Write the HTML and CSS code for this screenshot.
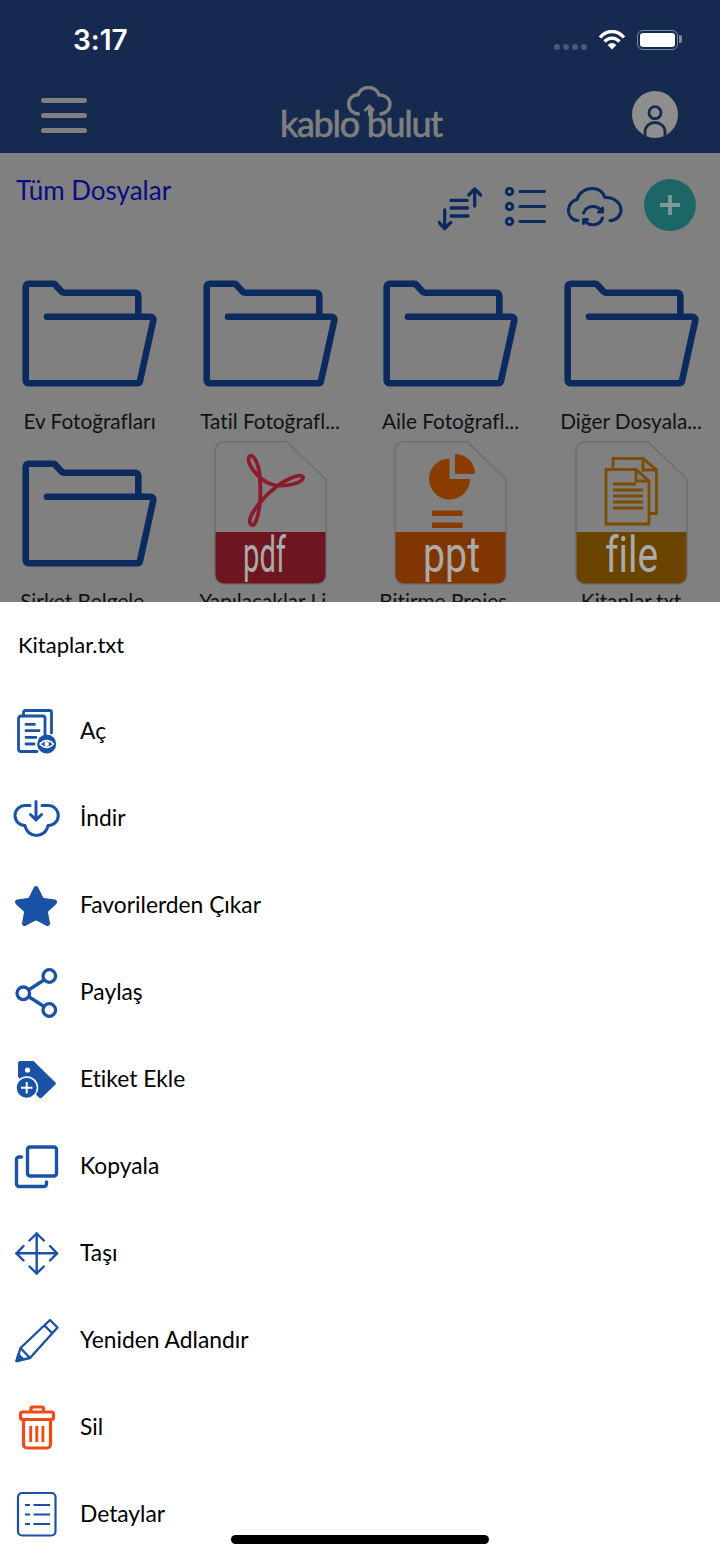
FILE: index.html
```html
<!DOCTYPE html>
<html lang="tr">
<head>
    <meta charset="UTF-8">
    <meta name="viewport" content="width=device-width, initial-scale=1.0">
    <title>Kablo Bulut</title>
    <link rel="stylesheet" href="styles.css">
</head>
<body>
    <svg class="defs" width="0" height="0">
        <symbol id="folder" viewBox="0 0 135 107">
            <path d="M25 36.700H128.400A3 3 0 0 1 131.300 40.300L118 100.900A3 3 0 0 1 115.100 103.300H6.700A3 3 0 0 1 3.700 100.300V6.700A3 3 0 0 1 6.700 3.700H31A3 3 0 0 1 33 4.400L40 12A3 3 0 0 0 42 12.700H113.300A3 3 0 0 1 116.300 15.700V36" fill="none" stroke="currentColor" stroke-width="6.600" stroke-linecap="round" stroke-linejoin="round"/>
        </symbol>
        <symbol id="sheet" viewBox="0 0 113 144">
            <path d="M9 .7H73L112 38.500V134a9 9 0 0 1-9 9H10a9 9 0 0 1-9-9V9a9 9 0 0 1 8-8.300Z" fill="#808080" stroke="#6e6e6e" stroke-width="1.500"/>
        </symbol>
    </svg>

    <header class="topbar">
        <div class="status">
            <span class="clock">3:17</span>
            <div class="status-icons">
                <span class="signal"><i></i><i></i><i></i><i></i></span>
                <svg class="wifi" width="28" height="20" viewBox="0 0 28 20">
                    <path d="M2 7.500C9-.5 19-.5 26 7.500M6.500 11.500C11 7 17 7 21.500 11.500" fill="none" stroke="#fff" stroke-width="3.400"/>
                    <path d="M9.700 15C12.500 12.300 15.500 12.300 18.300 15L14 19.500Z" fill="#fff"/>
                </svg>
                <span class="battery"><b></b></span>
            </div>
        </div>
        <div class="navbar">
            <div class="burger"><i></i><i></i><i></i></div>
            <svg class="logo" width="170" height="62" viewBox="-5 0 170 62">
                <path d="M79.700 28C72 28 68.700 23 68.700 18C68.700 12.500 73 8.500 78 8.800C80 3.500 84.500 1.500 88.500 1.500C93.500 1.500 98 4.500 99 9C104.500 8.500 110 12.500 110 18C110 23.500 106 28 99.500 28" fill="none" stroke="#7f7f7f" stroke-width="3.400"/>
                <path d="M84.500 25L89.300 20L94 25" fill="none" stroke="#7f7f7f" stroke-width="2.600"/>
                <path d="M89.300 22V30" stroke="#7f7f7f" stroke-width="2.800"/>
                <text class="logo-text" x="0" y="51">kablo bulut</text>
            </svg>
            <div class="avatar">
                <svg width="46" height="47" viewBox="0 0 46 47">
                    <circle cx="23" cy="21.700" r="6" fill="none" stroke="#152a4e" stroke-width="2.800"/>
                    <path d="M13 47V41C13 35 18 31.500 23 31.500C28 31.500 33 35 33 41V47" fill="none" stroke="#152a4e" stroke-width="2.800"/>
                </svg>
            </div>
        </div>
    </header>

    <main class="files">
        <div class="toolbar">
            <h1 class="crumb">Tüm Dosyalar</h1>
            <div class="tools">
                <svg class="tool-sort" width="44" height="44" viewBox="0 0 44 44" fill="none" stroke="#0b2a5e" stroke-width="3.300" stroke-linecap="round" stroke-linejoin="round">
                    <path d="M36.700 2V19M30.700 8L36.700 2L42.700 8M6.700 23V41.500M.9 35.500L6.700 41.500L12.700 35.500M13 13.400H29M13 21H29.500M13 29H30"/>
                </svg>
                <svg class="tool-list" width="41" height="40" viewBox="0 0 41 40" fill="none" stroke="#0b2a5e" stroke-width="3.100" stroke-linecap="round">
                    <circle cx="4.500" cy="4.500" r="3.200"/>
                    <circle cx="4.500" cy="19.500" r="3.200"/>
                    <circle cx="4.500" cy="34.500" r="3.200"/>
                    <path d="M15 4.500H39.500M15 19.500H39.500M15 34.500H39.500"/>
                </svg>
                <svg class="tool-cloud" width="56" height="41" viewBox="0 0 56 41" fill="none" stroke="#0b2a5e" stroke-width="3.100" stroke-linecap="round" stroke-linejoin="round">
                    <path d="M11 33.500C5 33.500 1.500 28.500 1.500 23.500C1.500 18 5 13.500 10 12.500C12 6 18 1.500 25 1.500C31 1.500 36 5 38 10.500C47 10 54 16 54 23C54 29 49 33.500 43 33.500"/>
                    <path d="M16.500 26A10 10 0 0 1 34.500 24.500M35.500 21V25H31.500M35.500 31A10 10 0 0 1 17.500 33M16.500 36.500V32.500H20.500"/>
                </svg>
                <div class="add">
                    <svg width="22" height="22" viewBox="0 0 22 22"><path d="M11 1V21M1 11H21" stroke="#809a98" stroke-width="3.800"/></svg>
                </div>
            </div>
        </div>

        <div class="grid">
            <div class="cell">
                <div class="thumb"><svg class="folder"><use href="#folder"/></svg></div>
                <p class="name">Ev Fotoğrafları</p>
            </div>
            <div class="cell">
                <div class="thumb"><svg class="folder"><use href="#folder"/></svg></div>
                <p class="name">Tatil Fotoğrafl...</p>
            </div>
            <div class="cell">
                <div class="thumb"><svg class="folder"><use href="#folder"/></svg></div>
                <p class="name">Aile Fotoğrafl...</p>
            </div>
            <div class="cell">
                <div class="thumb"><svg class="folder"><use href="#folder"/></svg></div>
                <p class="name">Diğer Dosyala...</p>
            </div>
            <div class="cell">
                <div class="thumb"><svg class="folder"><use href="#folder"/></svg></div>
                <p class="name">Şirket Belgele...</p>
            </div>
            <div class="cell">
                <div class="thumb">
                    <svg class="doc" viewBox="0 0 113 144">
                        <use href="#sheet"/>
                        <path d="M1.500 91H111.500V134a8.500 8.500 0 0 1-8.500 8.500H10a8.500 8.500 0 0 1-8.500-8.500Z" fill="#6e1620"/>
                        <path d="M36 15C40 13 46 25 46 40C47 55 46 70 42 80C40 86 35 85 36 78C38 70 50 55 62 46C72 38 86 32 89 36C90 42 72 46 60 44C50 42 40 32 36 24C34 19 34 16 36 15Z" fill="none" stroke="#8a1c2c" stroke-width="3.800"/>
                        <text class="doc-label" x="29" y="131" textLength="43" lengthAdjust="spacingAndGlyphs">pdf</text>
                    </svg>
                </div>
                <p class="name">Yapılacaklar Li...</p>
            </div>
            <div class="cell">
                <div class="thumb">
                    <svg class="doc" viewBox="0 0 113 144">
                        <use href="#sheet"/>
                        <path d="M1.500 91H111.500V134a8.500 8.500 0 0 1-8.500 8.500H10a8.500 8.500 0 0 1-8.500-8.500Z" fill="#803600"/>
                        <path d="M55.500 38V17.500A20.500 20.500 0 1 0 76 38Z" fill="#8a3c00"/>
                        <path d="M61 33V13A20 20 0 0 1 81 33Z" fill="#8a3c00"/>
                        <path d="M38 69.500H68.500V75H38ZM38 81.500H68.500V87H38Z" fill="#8a3c00"/>
                        <text class="doc-label" x="29" y="131" textLength="57" lengthAdjust="spacingAndGlyphs">ppt</text>
                    </svg>
                </div>
                <p class="name">Bitirme Projes...</p>
            </div>
            <div class="cell">
                <div class="thumb">
                    <svg class="doc" viewBox="0 0 113 144">
                        <use href="#sheet"/>
                        <path d="M1.500 91H111.500V134a8.500 8.500 0 0 1-8.500 8.500H10a8.500 8.500 0 0 1-8.500-8.500Z" fill="#6a4400"/>
                        <g fill="none" stroke="#7a4e00" stroke-width="2.800">
                            <path d="M38 27V17.500H68L81.500 29V72.500H75"/>
                            <path d="M68 17.500V29H81.500"/>
                            <path d="M31 28.500H61L74 40V83H31Z"/>
                            <path d="M61 28.500V40H74"/>
                            <path d="M38 43H61M38 49H68M38 55H68M38 61H68M38 67H68"/>
                        </g>
                        <text class="doc-label" x="30" y="131" textLength="53" lengthAdjust="spacingAndGlyphs">file</text>
                    </svg>
                </div>
                <p class="name">Kitaplar.txt</p>
            </div>
        </div>
    </main>

    <section class="sheet">
        <p class="sheet-title">Kitaplar.txt</p>
        <ul class="actions">
            <li class="action">
                <svg class="action-icon" viewBox="0 0 46 46" fill="none" stroke="#1a52a6" stroke-width="2.800" stroke-linecap="round" stroke-linejoin="round">
                    <path d="M9.500 7V3.500A2 2 0 0 1 11.500 1.500H35.500A2 2 0 0 1 37.500 3.500V24"/>
                    <path d="M31 25V9A2 2 0 0 0 29 7H7A2.500 2.500 0 0 0 4.500 9.500V40A2.500 2.500 0 0 0 7 42.500H23"/>
                    <path d="M12 15.300H20.500M12 21.700H25M12 28.300H22M12 35H20"/>
                    <circle cx="32.700" cy="35" r="9.500" fill="#1a52a6" stroke="none"/>
                    <path d="M26 35C30 30.500 35.500 30.500 39.500 35C35.500 39.500 30 39.500 26 35Z" fill="none" stroke="#fff" stroke-width="1.600"/>
                    <circle cx="32.700" cy="35" r="2.300" fill="#fff" stroke="none"/>
                </svg>
                <span class="action-label">Aç</span>
            </li>
            <li class="action">
                <svg class="action-icon" viewBox="0 0 46 46" fill="none" stroke="#1a52a6" stroke-width="3" stroke-linecap="round" stroke-linejoin="round">
                    <path d="M16 9.500H11.500A10 10 0 0 0 10.500 29.500H11C12 35.500 17 39.500 22.500 39.500S33 35.500 34 29.500H34.500A10 10 0 0 0 34 9.500H28"/>
                    <path d="M22 5.500V24M16.500 18.500L22 24L27.500 18.500"/>
                </svg>
                <span class="action-label">İndir</span>
            </li>
            <li class="action">
                <svg class="action-icon" viewBox="0 0 46 46">
                    <path d="M22 5.500L27.800 17.300L40.500 19.100L31.200 28L33.500 40.500L22 34.500L10.500 40.500L12.800 28L3.500 19.100L16.200 17.300Z" fill="#1a52a6" stroke="#1a52a6" stroke-width="5" stroke-linejoin="round"/>
                </svg>
                <span class="action-label">Favorilerden Çıkar</span>
            </li>
            <li class="action">
                <svg class="action-icon" viewBox="0 0 46 46" fill="none" stroke="#1a52a6" stroke-width="3.300">
                    <circle cx="35.300" cy="6" r="6.300"/>
                    <circle cx="9.300" cy="23.300" r="6.300"/>
                    <circle cx="35.300" cy="40" r="6.300"/>
                    <path d="M14.500 20L30 10M14.500 26.500L30 36.500"/>
                </svg>
                <span class="action-label">Paylaş</span>
            </li>
            <li class="action">
                <svg class="action-icon" viewBox="0 0 46 46">
                    <path d="M6 4.500H19.500L41 25.500A1.500 1.500 0 0 1 41 27.500L27.500 40.500A1.500 1.500 0 0 1 25.500 40.500L4.500 20V6A1.500 1.500 0 0 1 6 4.500Z" fill="#1a52a6" stroke="#1a52a6" stroke-width="1" stroke-linejoin="round"/>
                    <circle cx="13.500" cy="13" r="2.600" fill="#fff"/>
                    <circle cx="12.700" cy="30.700" r="11.500" fill="#fff"/>
                    <circle cx="12.700" cy="30.700" r="10" fill="#1a52a6"/>
                    <path d="M12.700 25V36.400M7 30.700H18.400" stroke="#fff" stroke-width="2"/>
                </svg>
                <span class="action-label">Etiket Ekle</span>
            </li>
            <li class="action">
                <svg class="action-icon" viewBox="0 0 46 46" fill="none" stroke="#1a52a6" stroke-width="3.400" stroke-linecap="round" stroke-linejoin="round">
                    <rect x="13.500" y="3" width="29" height="29" rx="2.500"/>
                    <path d="M7.500 13H5A2.500 2.500 0 0 0 2.500 15.500V40A2.500 2.500 0 0 0 5 42.500H30A2.500 2.500 0 0 0 32.500 40V38"/>
                </svg>
                <span class="action-label">Kopyala</span>
            </li>
            <li class="action">
                <svg class="action-icon" viewBox="0 0 46 46" fill="none" stroke="#1a52a6" stroke-width="2.400" stroke-linecap="round" stroke-linejoin="round">
                    <path d="M22.700 2.500V42.500M2.500 22.300H43"/>
                    <path d="M15.500 9.500L22.700 2.500L29.800 9.500M15.500 35.500L22.700 42.500L29.800 35.500M9.500 15L2.500 22.300L9.500 29.500M36 15L43 22.300L36 29.500"/>
                </svg>
                <span class="action-label">Taşı</span>
            </li>
            <li class="action">
                <svg class="action-icon" viewBox="0 0 46 46" fill="none" stroke="#1a52a6" stroke-width="2.400" stroke-linejoin="round">
                    <path d="M2.500 43L6.500 30L36 2L43.500 9.500L16 40Z"/>
                    <path d="M30.500 7.500L38.500 15.500M6.500 30L16 40"/>
                    <path d="M2.500 43L4.500 36.500L9 41Z" fill="#1a52a6"/>
                </svg>
                <span class="action-label">Yeniden Adlandır</span>
            </li>
            <li class="action">
                <svg class="action-icon" viewBox="0 0 46 46" fill="none" stroke="#ef4a14" stroke-width="3.200" stroke-linejoin="round">
                    <rect x="6.500" y="7" width="33" height="7.500" rx="2"/>
                    <path d="M17 7V3.500A1.500 1.500 0 0 1 18.500 2H28A1.500 1.500 0 0 1 29.500 3.500V7"/>
                    <path d="M9.500 14.500V39.500A3.500 3.500 0 0 0 13 43H33A3.500 3.500 0 0 0 36.500 39.500V14.500"/>
                    <path d="M16.700 21V37M22.800 21V37M28.900 21V37" stroke-width="2.900"/>
                </svg>
                <span class="action-label">Sil</span>
            </li>
            <li class="action">
                <svg class="action-icon" viewBox="0 0 46 46" fill="none" stroke="#1a52a6" stroke-width="2.200">
                    <rect x="4" y="1" width="37.500" height="42.500" rx="4"/>
                    <path d="M19.500 13H36M19.500 22.500H36M19.500 32H36"/>
                    <path d="M11 13H16M11 22.500H16M11 32H16"/>
                </svg>
                <span class="action-label">Detaylar</span>
            </li>
        </ul>
    </section>
    <div class="home-bar"></div>
</body>
</html>
```

FILE: styles.css
```css
* {
    box-sizing: border-box;
}

body {
    position: relative;
    width: 720px;
    height: 1558px;
    margin: 0;
    overflow: hidden;
    background-color: #808080;
    font-family: "Lato", "Noto Sans", sans-serif;
    font-variant-ligatures: none;
    color: #000;
}

.defs {
    position: absolute;
}

/* header */
.topbar {
    height: 153px;
    background-color: #152a4e;
}

.status {
    display: flex;
    justify-content: space-between;
    align-items: center;
    height: 64px;
    padding: 15px 42px 0 73px;
}

.clock {
    font-family: "Inter", sans-serif;
    font-size: 28px;
    font-weight: 600;
    color: #fff;
}

.status-icons {
    display: flex;
    align-items: center;
}

.signal {
    display: flex;
    gap: 3px;
    margin: 14px 11px 0 0;
}

.signal i {
    width: 6px;
    height: 6px;
    border-radius: 50%;
    background-color: #4a5a78;
}

.battery {
    position: relative;
    width: 41px;
    height: 20px;
    margin-left: 11px;
    padding: 2px;
    border: 1.5px solid #7d8ba3;
    border-radius: 6px;
}

.battery b {
    display: block;
    height: 100%;
    border-radius: 3px;
    background-color: #fff;
}

.battery::after {
    content: "";
    position: absolute;
    top: 4px;
    right: -5px;
    width: 3px;
    height: 8px;
    border-radius: 0 2px 2px 0;
    background-color: #7d8ba3;
}

.navbar {
    display: flex;
    justify-content: space-between;
    align-items: flex-start;
    height: 89px;
    padding: 27px 42px 0 41px;
}

.burger {
    display: flex;
    flex-direction: column;
    gap: 10px;
    width: 46px;
    margin-top: 7px;
}

.burger i {
    height: 5px;
    border-radius: 3px;
    background-color: #808080;
}

.logo {
    margin-top: -5px;
}

.logo-text {
    font-family: "Lato", sans-serif;
    font-size: 36px;
    letter-spacing: -1.300px;
    fill: #7f7f7f;
    stroke: #7f7f7f;
    stroke-width: 0.700px;
}

.avatar {
    width: 46px;
    height: 47px;
    border-radius: 50%;
    overflow: hidden;
    background-color: #8e8e8e;
}

/* file area */
.toolbar {
    display: flex;
    justify-content: space-between;
    align-items: flex-start;
    height: 107px;
    padding: 22px 24px 0 16px;
}

.crumb {
    margin: 0;
    font-size: 26px;
    line-height: 30px;
    font-weight: 400;
    color: #0a0a86;
}

.tools {
    display: flex;
    align-items: center;
    gap: 21px;
    padding-top: 4px;
}

.tool-sort {
    margin: 8px 2px 0 0;
}

.tool-list {
    margin-top: 4px;
}

.tool-cloud {
    margin-top: 5px;
}

.add {
    display: flex;
    justify-content: center;
    align-items: center;
    width: 52px;
    height: 52px;
    border-radius: 50%;
    background-color: #1c6765;
}

.grid {
    display: grid;
    grid-template-columns: repeat(4, 180.500px);
    row-gap: 2px;
    margin-left: -0.700px;
}

.thumb {
    display: flex;
    justify-content: center;
    align-items: center;
    height: 146px;
}

.folder {
    width: 135px;
    height: 107px;
    color: #0b2a5e;
}

.doc {
    width: 113px;
    height: 144px;
}

.doc-label {
    font-family: "Roboto", sans-serif;
    font-size: 50px;
    font-weight: 400;
    fill: #aaa;
}

.name {
    margin: 0;
    padding-bottom: 2px;
    font-size: 20.800px;
    line-height: 30px;
    text-align: center;
    color: #111;
    white-space: nowrap;
}

/* bottom sheet */
.sheet {
    position: absolute;
    left: 0;
    right: 0;
    bottom: 0;
    height: 956px;
    background-color: #fff;
}

.sheet-title {
    height: 86.500px;
    margin: 0;
    padding: 29px 18px 0;
    font-size: 22px;
    line-height: 27px;
}

.actions {
    margin: 0;
    padding: 0;
    list-style: none;
}

.action {
    display: flex;
    align-items: center;
    gap: 20px;
    height: 87px;
    padding-left: 14px;
}

.action-icon {
    width: 46px;
    height: 46px;
    flex-shrink: 0;
    overflow: visible;
}

.action-label {
    padding-bottom: 4px;
    font-size: 22.800px;
}

.home-bar {
    position: absolute;
    left: 231px;
    bottom: 14px;
    width: 258px;
    height: 9px;
    border-radius: 5px;
    background-color: #000;
}
```
